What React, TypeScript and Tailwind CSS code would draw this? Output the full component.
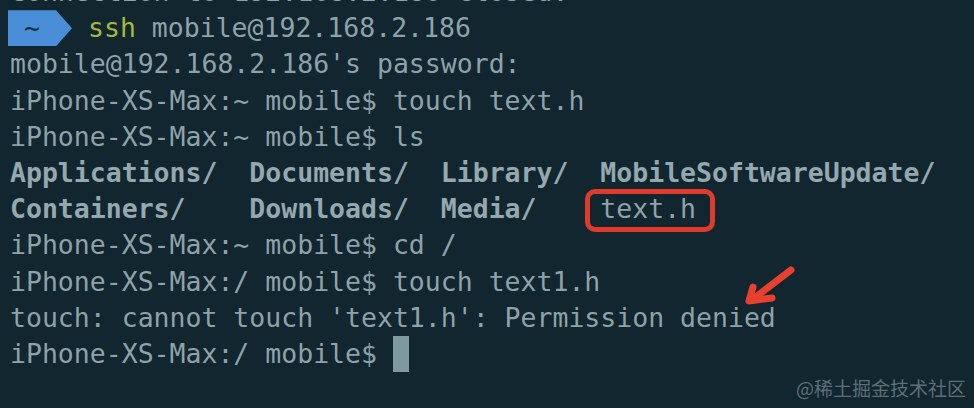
const mono = "font-['DejaVu_Sans_Mono','Liberation_Mono',monospace]";

function Line({ children }: { children?: React.ReactNode }) {
  return <div className="h-[36.2px] leading-[36.2px] whitespace-pre">{children}</div>;
}

export default function App() {
  return (
    <div className="relative h-[408px] w-[974px] overflow-hidden bg-[#11262f]">
      <div className={`flex flex-col -mt-[26px] pl-[10px] text-[26.5px] text-[#8fa2a8] ${mono}`}>
        <Line>Connection to 192.168.2.186 closed.</Line>
        <Line>
          <div className="flex items-center h-full">
            <div className="-ml-[2px] flex items-center h-[36px] w-[64px] bg-[#4a8ed8] [clip-path:polygon(0_0,75%_0,100%_50%,75%_100%,0_100%)]">
              <span className="pl-[16px] text-[#12303f]">~</span>
            </div>
            <span className="pl-[16px] text-[#a6b83f]">ssh</span>
            <span> mobile@192.168.2.186</span>
          </div>
        </Line>
        <Line>mobile@192.168.2.186's password:</Line>
        <Line>iPhone-XS-Max:~ mobile$ touch text.h</Line>
        <Line>iPhone-XS-Max:~ mobile$ ls</Line>
        <Line>
          <span className="font-bold text-[#95a8ae]">Applications/  Documents/  Library/  MobileSoftwareUpdate/</span>
        </Line>
        <Line>
          <span className="font-bold text-[#95a8ae]">Containers/    Downloads/  Media/    </span>
          <span className="relative inline-block h-full">
            text.h
            <span className="absolute -left-[15px] -right-[19px] -top-[2px] -bottom-[5px] rounded-[10px] border-[5px] border-[#e03a2d]" />
          </span>
        </Line>
        <Line>iPhone-XS-Max:~ mobile$ cd /</Line>
        <Line>iPhone-XS-Max:/ mobile$ touch text1.h</Line>
        <Line>touch: cannot touch 'text1.h': Permission denied</Line>
        <Line>
          <div className="flex items-center h-full">
            <span>iPhone-XS-Max:/ mobile$ </span>
            <span className="w-[16px] h-[36px] bg-[#7f99a1]" />
          </div>
        </Line>
      </div>

      {/* annotation arrow */}
      <svg className="absolute left-0 top-0" width="974" height="408">
        <g stroke="#e8402e" strokeWidth="7" strokeLinecap="round" strokeLinejoin="round" fill="none">
          <line x1="791" y1="270" x2="753" y2="299" />
          <polyline points="753,287 749,301 772,298" />
        </g>
      </svg>

      <div className="absolute right-[8px] bottom-[6px] text-[19px] text-[#5d6f77] font-['Noto_Sans_CJK_SC',sans-serif]">
        @稀土掘金技术社区
      </div>
    </div>
  );
}
